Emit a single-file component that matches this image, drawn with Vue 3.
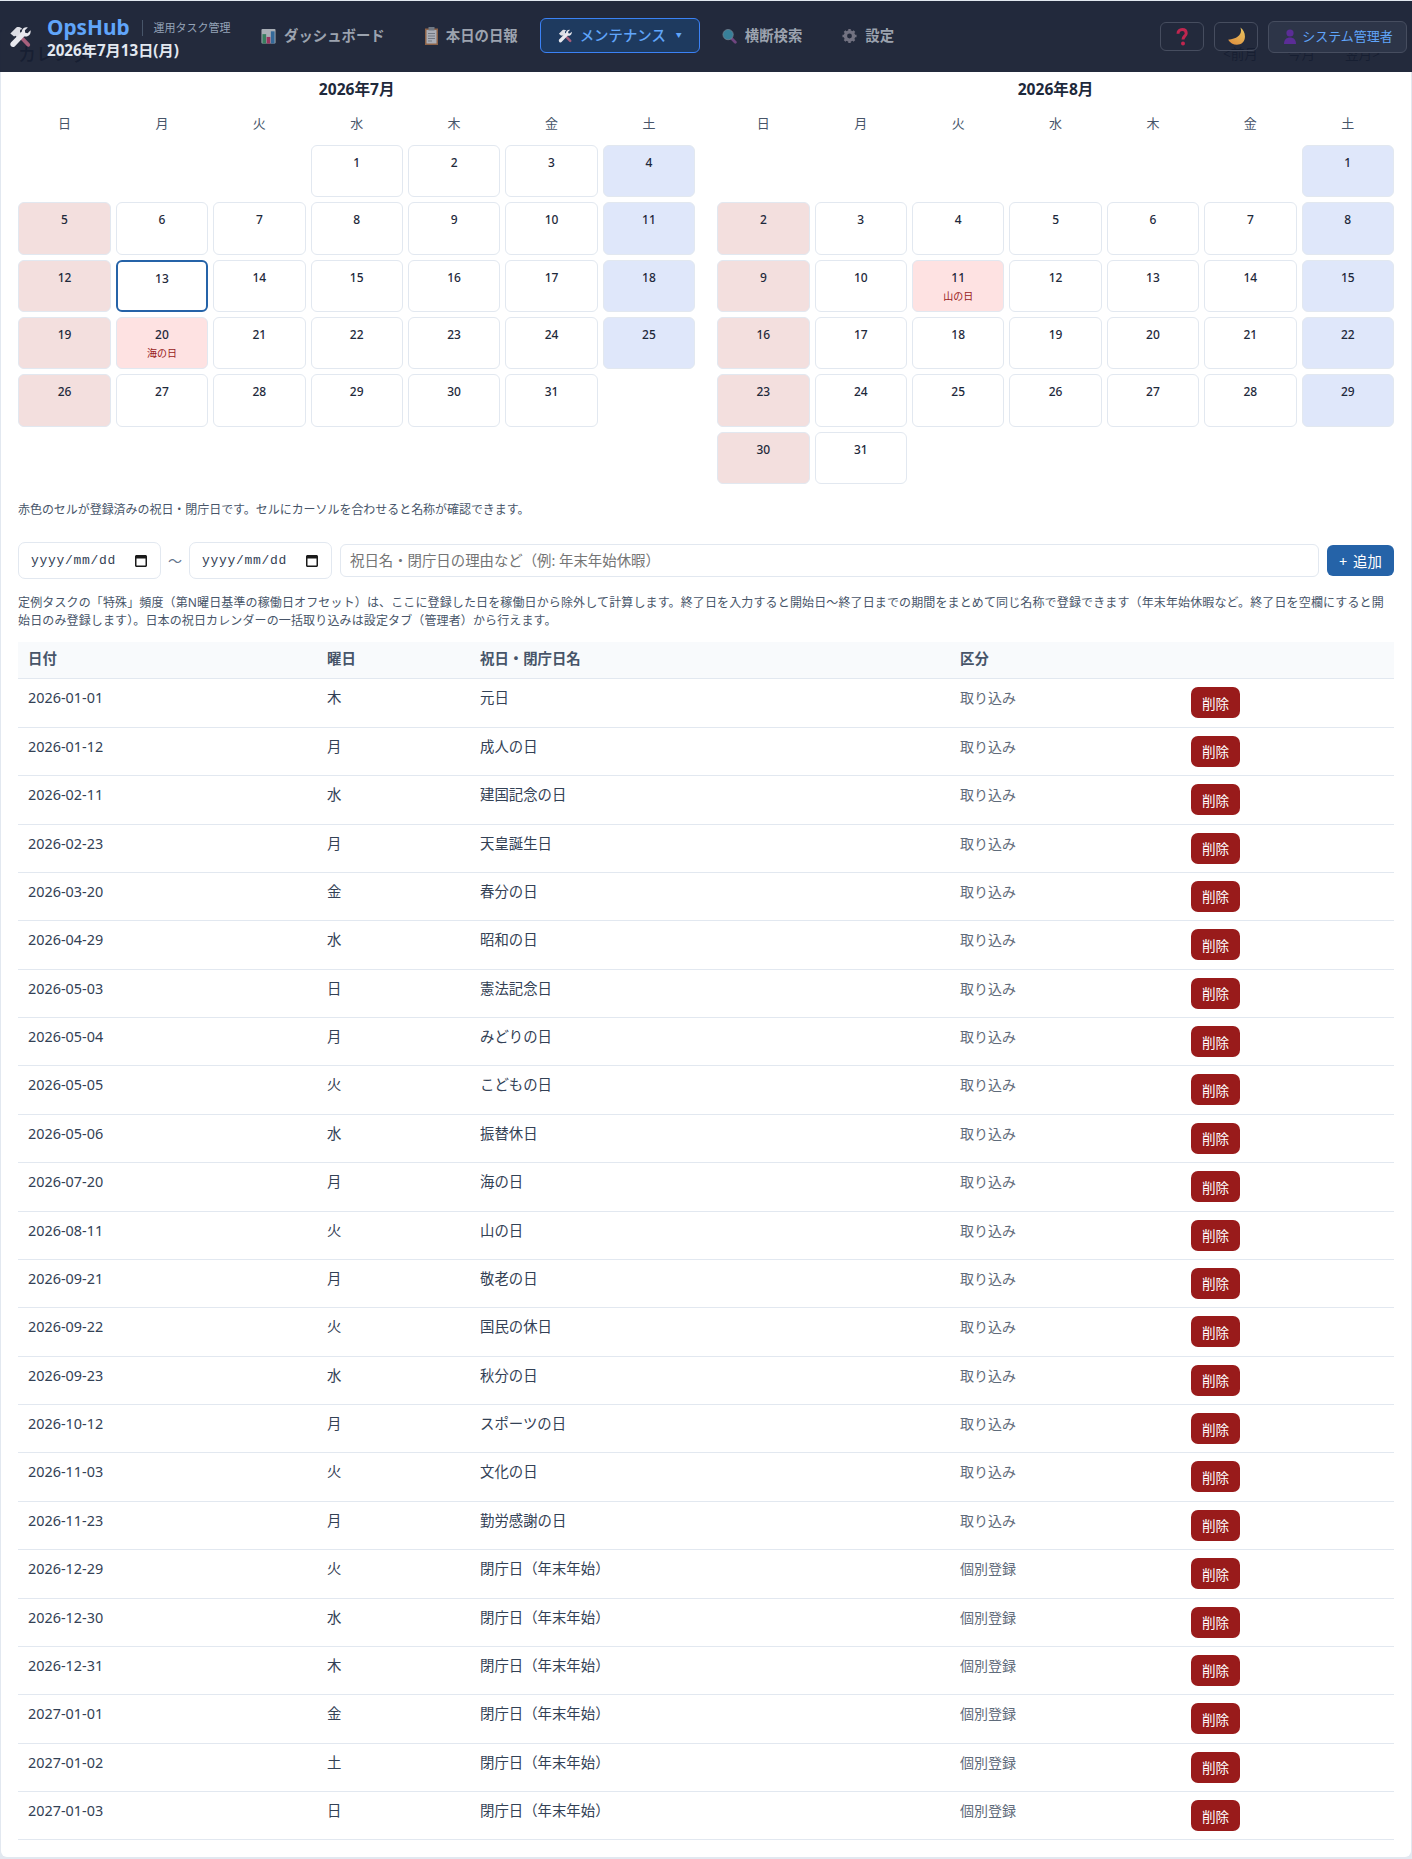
<script setup>
import { computed } from 'vue'

const weekdays = ['日', '月', '火', '水', '木', '金', '土']

// 登録済みの祝日・閉庁日
const holidays = [
  ['2026-01-01', '木', '元日', '取り込み'],
  ['2026-01-12', '月', '成人の日', '取り込み'],
  ['2026-02-11', '水', '建国記念の日', '取り込み'],
  ['2026-02-23', '月', '天皇誕生日', '取り込み'],
  ['2026-03-20', '金', '春分の日', '取り込み'],
  ['2026-04-29', '水', '昭和の日', '取り込み'],
  ['2026-05-03', '日', '憲法記念日', '取り込み'],
  ['2026-05-04', '月', 'みどりの日', '取り込み'],
  ['2026-05-05', '火', 'こどもの日', '取り込み'],
  ['2026-05-06', '水', '振替休日', '取り込み'],
  ['2026-07-20', '月', '海の日', '取り込み'],
  ['2026-08-11', '火', '山の日', '取り込み'],
  ['2026-09-21', '月', '敬老の日', '取り込み'],
  ['2026-09-22', '火', '国民の休日', '取り込み'],
  ['2026-09-23', '水', '秋分の日', '取り込み'],
  ['2026-10-12', '月', 'スポーツの日', '取り込み'],
  ['2026-11-03', '火', '文化の日', '取り込み'],
  ['2026-11-23', '月', '勤労感謝の日', '取り込み'],
  ['2026-12-29', '火', '閉庁日（年末年始）', '個別登録'],
  ['2026-12-30', '水', '閉庁日（年末年始）', '個別登録'],
  ['2026-12-31', '木', '閉庁日（年末年始）', '個別登録'],
  ['2027-01-01', '金', '閉庁日（年末年始）', '個別登録'],
  ['2027-01-02', '土', '閉庁日（年末年始）', '個別登録'],
  ['2027-01-03', '日', '閉庁日（年末年始）', '個別登録']
]

const buildMonth = (title, month, offset, days) => {
  const cells = []
  for (let i = 0; i < offset; i++) cells.push({ key: 'e' + i, empty: true })
  for (let d = 1; d <= days; d++) {
    const dow = (offset + d - 1) % 7
    const iso = `2026-${String(month).padStart(2, '0')}-${String(d).padStart(2, '0')}`
    const hit = holidays.find(h => h[0] === iso)
    cells.push({
      key: iso,
      day: d,
      sun: dow === 0,
      sat: dow === 6,
      holiday: hit ? hit[2] : '',
      today: iso === '2026-07-13'
    })
  }
  return { title, cells }
}

const months = computed(() => [
  buildMonth('2026年7月', 7, 3, 31),
  buildMonth('2026年8月', 8, 6, 31)
])
</script>

<template>
  <div class="page">
    <svg class="defs" width="0" height="0">
      <defs>
        <linearGradient id="moon" x1="0.8" y1="0" x2="0.2" y2="1">
          <stop offset="0" stop-color="#e8c25f" />
          <stop offset="1" stop-color="#e0913f" />
        </linearGradient>
      </defs>
      <symbol id="tools" viewBox="0 0 24 24">
        <path d="M10 9 21 20.500" stroke="#a8607c" stroke-width="4.200" stroke-linecap="round" />
        <path d="M1.500 8.200 8 1.500c2.200-.8 4.500-.3 6.500 1.700l-2.300.8-.2 2.500 1 1-4.500 4.500-1.500-1.500-1.500 1Z" fill="#dcdde4" />
        <path d="M14 5.500C14.500 2.500 17.500.8 20.500 1.500L17.300 4.700l.4 2.600 2.600.5 3.200-3.200c.7 3-1 6-4 6.800-1 .3-2 .2-3 0L6.500 22c-1.300 1.300-3 1.300-4.200.1S1 19 2.300 17.700L14 6Z" fill="#e8e8ee" />
      </symbol>
    </svg>

    <header class="topbar">
      <div class="brand">
        <svg class="logo"><use href="#tools" /></svg>
        <div>
          <div class="brand-line">
            <span class="brand-name">OpsHub</span>
            <span class="brand-sub">運用タスク管理</span>
          </div>
          <div class="brand-date">2026年7月13日(月)</div>
        </div>
      </div>

      <nav class="nav">
        <a class="nav-item">
          <svg class="nav-icon" viewBox="0 0 16 16">
            <rect x="0.500" y="0.500" width="15" height="15.500" rx="1" fill="#d5dade" />
            <rect x="1.500" y="6" width="4" height="10" fill="#3f9b6d" />
            <rect x="6" y="9" width="4" height="7" fill="#c2386b" />
            <rect x="10.500" y="3" width="4" height="13" fill="#3a7fb8" />
          </svg>
          ダッシュボード
        </a>
        <a class="nav-item">
          <svg class="nav-icon clip" viewBox="0 0 13 18">
            <rect x="0" y="1.500" width="13" height="16.500" fill="#b2774c" />
            <rect x="1.500" y="3" width="10" height="13.500" fill="#d8dbe0" />
            <rect x="3.500" y="0" width="6" height="3.500" fill="#8a939c" />
            <path d="M3 6.500h7M3 9h7M3 11.500h7M3 14h4" stroke="#8b939b" stroke-width="1" />
          </svg>
          本日の日報
        </a>
        <a class="nav-item active">
          <svg class="nav-icon tools"><use href="#tools" /></svg>
          メンテナンス
          <span class="caret">▼</span>
        </a>
        <a class="nav-item">
          <svg class="nav-icon" viewBox="0 0 16 16">
            <path d="M10 10.500 14.200 14.700" stroke="#8a4f96" stroke-width="3" stroke-linecap="round" />
            <circle cx="6.500" cy="6.500" r="5.500" fill="#3f9db8" stroke="#8fa3b0" stroke-width="0.800" />
          </svg>
          横断検索
        </a>
        <a class="nav-item">
          <svg class="nav-icon" viewBox="0 0 16 16">
            <circle cx="8" cy="8" r="4.400" fill="none" stroke="#8d8a98" stroke-width="3.600" />
            <path d="M8 .5v3M8 12.500v3M.5 8h3M12.500 8h3M2.700 2.700l2 2M11.300 11.300l2 2M13.300 2.700l-2 2M4.700 11.300l-2 2" stroke="#8d8a98" stroke-width="2.600" />
          </svg>
          設定
        </a>
      </nav>

      <div class="top-actions">
        <button class="icon-btn">
          <svg class="help-icon" viewBox="0 0 16 18">
            <path d="M4 5.800C4 3 5.800 1.500 8.200 1.500s4 1.500 4 3.700c0 3-3.200 3-3.200 6.300" fill="none" stroke="#c0264f" stroke-width="3" />
            <circle cx="9" cy="15.600" r="2" fill="#c0264f" />
          </svg>
        </button>
        <button class="icon-btn">
          <svg class="moon-icon" viewBox="0 0 17 17">
            <path d="M12 .5C14 5.500 10.500 10.500 1 11.500 3.500 16 10 17.500 13.800 14.200 17.500 10.500 16.500 3.500 12 .5Z" fill="url(#moon)" />
          </svg>
        </button>
        <button class="user-btn">
          <svg class="btn-icon" viewBox="0 0 16 16">
            <circle cx="8" cy="5" r="3.600" fill="#5b2d96" />
            <path d="M2 16c0-4.500 2.600-6.500 6-6.500s6 2 6 6.500Z" fill="#5b2d96" />
          </svg>
          システム管理者
        </button>
      </div>
    </header>

    <main class="card">
      <div class="card-head">
        <h2>カレンダー</h2>
        <div class="month-nav">
          <span>&lt;前月</span>
          <span>今月</span>
          <span>翌月&gt;</span>
        </div>
      </div>

      <div class="months">
        <section v-for="m in months" :key="m.title" class="month">
          <div class="month-title">{{ m.title }}</div>
          <div class="grid">
            <div v-for="w in weekdays" :key="w" class="weekday">{{ w }}</div>
            <template v-for="c in m.cells" :key="c.key">
              <div v-if="c.empty"></div>
              <div
                v-else
                class="cell"
                :class="{ sun: c.sun, sat: c.sat, holiday: c.holiday, today: c.today }"
              >
                <div class="num">{{ c.day }}</div>
                <div v-if="c.holiday" class="hname">{{ c.holiday }}</div>
              </div>
            </template>
          </div>
        </section>
      </div>

      <p class="note legend">赤色のセルが登録済みの祝日・閉庁日です。セルにカーソルを合わせると名称が確認できます。</p>

      <form class="add-form" @submit.prevent>
        <label class="date">
          <span>yyyy/mm/dd</span>
          <svg class="cal" viewBox="0 0 12 13">
            <path d="M0 2.500C0 1.700.7 1 1.500 1h9c.8 0 1.500.7 1.500 1.500v9c0 .8-.7 1.500-1.500 1.500h-9C.7 13 0 12.300 0 11.500ZM1.500 4.500v7h9v-7Z" fill="#1a1a1a" fill-rule="evenodd" />
          </svg>
        </label>
        <span class="tilde">～</span>
        <label class="date">
          <span>yyyy/mm/dd</span>
          <svg class="cal" viewBox="0 0 12 13">
            <path d="M0 2.500C0 1.700.7 1 1.500 1h9c.8 0 1.500.7 1.500 1.500v9c0 .8-.7 1.500-1.500 1.500h-9C.7 13 0 12.300 0 11.500ZM1.500 4.500v7h9v-7Z" fill="#1a1a1a" fill-rule="evenodd" />
          </svg>
        </label>
        <input type="text" class="reason" placeholder="祝日名・閉庁日の理由など（例: 年末年始休暇）" />
        <button class="add">+ 追加</button>
      </form>

      <p class="note help">定例タスクの「特殊」頻度（第N曜日基準の稼働日オフセット）は、ここに登録した日を稼働日から除外して計算します。終了日を入力すると開始日～終了日までの期間をまとめて同じ名称で登録できます（年末年始休暇など。終了日を空欄にすると開始日のみ登録します）。日本の祝日カレンダーの一括取り込みは設定タブ（管理者）から行えます。</p>

      <table class="list">
        <colgroup>
          <col class="c-date" />
          <col class="c-dow" />
          <col class="c-name" />
          <col class="c-kind" />
          <col class="c-act" />
        </colgroup>
        <thead>
          <tr>
            <th>日付</th>
            <th>曜日</th>
            <th>祝日・閉庁日名</th>
            <th>区分</th>
            <th></th>
          </tr>
        </thead>
        <tbody>
          <tr v-for="h in holidays" :key="h[0]">
            <td>{{ h[0] }}</td>
            <td>{{ h[1] }}</td>
            <td>{{ h[2] }}</td>
            <td class="kind">{{ h[3] }}</td>
            <td class="act"><button class="del">削除</button></td>
          </tr>
        </tbody>
      </table>
    </main>
  </div>
</template>

<style>
html,
body {
  margin: 0;
  background: #e2e8f0;
}
</style>

<style scoped>
.page {
  position: relative;
  width: 1412px;
  height: 1859px;
  overflow: hidden;
  background: #e2e8f0;
  font-family: "Noto Sans", "Noto Sans CJK JP", sans-serif;
  color: #1e293b;
}

.defs {
  position: absolute;
}

.topbar {
  position: absolute;
  top: 1px;
  left: 0;
  right: 0;
  height: 71px;
  z-index: 10;
  display: flex;
  align-items: center;
  padding: 0 5px 0 9px;
  box-sizing: border-box;
  background: rgba(23, 31, 50, 0.95);
}

.brand {
  display: flex;
  align-items: center;
  gap: 16px;
  width: 234px;
  flex-shrink: 0;
}

.logo {
  width: 22px;
  height: 22px;
  margin-top: 1px;
}

.brand-line {
  display: flex;
  align-items: center;
  white-space: nowrap;
}

.brand-name {
  font-size: 20.8px;
  line-height: 26px;
  font-weight: 700;
  color: #60a5fa;
}

.brand-sub {
  margin-top: 3px;
  margin-left: 12px;
  padding-left: 11px;
  border-left: 1px solid #475569;
  font-size: 11px;
  line-height: 16px;
  color: #94a3b8;
}

.brand-date {
  font-size: 15.2px;
  line-height: 20px;
  font-weight: 700;
  color: #e2e8f0;
  white-space: nowrap;
}

.nav {
  display: flex;
  align-items: center;
  gap: 4px;
  margin-top: -2px;
}

.nav-item {
  display: flex;
  align-items: center;
  gap: 8px;
  height: 35px;
  padding: 0 17px 2px;
  box-sizing: border-box;
  border: 1px solid transparent;
  border-radius: 6px;
  font-size: 14.4px;
  font-weight: 700;
  color: #9ca3af;
  white-space: nowrap;
}

.nav-item.active {
  background: #1e3a5f;
  border-color: #3b82f6;
  color: #60a5fa;
  font-weight: 500;
}

.nav-icon {
  width: 15px;
  height: 16px;
  margin-top: 3px;
  opacity: 0.75;
}

.nav-icon.clip {
  width: 13px;
  height: 18px;
}

.nav-icon.tools {
  width: 14px;
  height: 14px;
  opacity: 1;
}

.caret {
  width: 6px;
  margin-left: 2px;
  font-size: 6px;
}

.top-actions {
  display: flex;
  align-items: center;
  gap: 10px;
  margin-left: auto;
}

.icon-btn {
  width: 44px;
  height: 29px;
  display: flex;
  align-items: center;
  justify-content: center;
  padding: 0;
  background: transparent;
  border: 1px solid #464d5f;
  border-radius: 6px;
}

.btn-icon {
  width: 16px;
  height: 16px;
}

.help-icon {
  width: 16px;
  height: 18px;
}

.moon-icon {
  width: 19px;
  height: 19px;
}

.user-btn {
  width: 139px;
  height: 32px;
  display: flex;
  align-items: center;
  justify-content: center;
  gap: 4px;
  padding: 0 0 2px;
  background: #2d3548;
  border: 1px solid #464d5f;
  border-radius: 6px;
  font-family: inherit;
  font-size: 13px;
  color: #60a5fa;
  white-space: nowrap;
}

.card {
  position: absolute;
  top: 30px;
  left: 1px;
  width: 1410px;
  height: 1827px;
  padding: 0 17px;
  box-sizing: border-box;
  background: #fff;
  border-radius: 6px;
}

.card-head {
  height: 45px;
  display: flex;
  align-items: center;
  justify-content: space-between;
}

.card-head h2 {
  margin: 0;
  font-size: 18px;
  font-weight: 500;
}

.month-nav {
  display: flex;
  gap: 30px;
  padding-right: 14px;
  font-size: 13.6px;
}

.months {
  display: grid;
  grid-template-columns: 1fr 1fr;
  gap: 22px;
  margin-left: 0.3px;
}

.month-title {
  height: 29px;
  line-height: 28px;
  text-align: center;
  font-size: 15.6px;
  font-weight: 700;
}

.grid {
  display: grid;
  grid-template-columns: repeat(7, 1fr);
  gap: 5px;
}

.weekday {
  height: 36px;
  line-height: 39px;
  text-align: center;
  font-size: 13px;
  color: #475569;
}

.cell {
  height: 52.330px;
  padding-top: 8px;
  box-sizing: border-box;
  text-align: center;
  background: #fff;
  border: 1px solid #e2e8f0;
  border-radius: 6px;
  font-size: 12px;
  line-height: 18px;
  font-weight: 500;
}

.cell.sun {
  background: #f3dfde;
}

.cell.sat {
  background: #dfe7fa;
}

.cell.holiday {
  background: #fee2e2;
}

.cell.today {
  border: 2px solid #2563a8;
}

.hname {
  margin-top: 1px;
  font-size: 10px;
  line-height: 16px;
  font-weight: 400;
  color: #991b1b;
}

.note {
  margin: 0;
  font-size: 12px;
  line-height: 16px;
  color: #475569;
}

.legend {
  margin-top: 18px;
  letter-spacing: -0.05px;
}

.add-form {
  display: flex;
  align-items: center;
  margin-top: 24px;
  height: 37px;
}

.date {
  width: 143px;
  height: 37px;
  display: flex;
  align-items: center;
  justify-content: space-between;
  padding: 0 13px 0 12px;
  box-sizing: border-box;
  background: #fff;
  border: 1px solid #e2e8f0;
  border-radius: 7px;
  font-family: "Liberation Mono", monospace;
  font-size: 13px;
  letter-spacing: 0.7px;
  color: #334155;
}

.cal {
  width: 12px;
  height: 13px;
}

.tilde {
  width: 28px;
  text-align: center;
  font-size: 14px;
  color: #64748b;
}

.reason {
  flex: 1;
  min-width: 0;
  height: 33px;
  margin-left: 8px;
  padding: 0 9px;
  box-sizing: border-box;
  border: 1px solid #e2e8f0;
  border-radius: 6px;
  font-family: inherit;
  font-size: 14.4px;
}

.reason::placeholder {
  color: #757575;
}

.add {
  width: 67px;
  height: 31px;
  margin-left: 8px;
  padding: 0;
  background: #2563a8;
  border: none;
  border-radius: 6px;
  color: #fff;
  font-family: inherit;
  font-size: 14.4px;
  word-spacing: 2px;
}

.help {
  margin-top: 15px;
  padding-right: 10px;
  line-height: 18px;
  letter-spacing: 0.13px;
}

.list {
  width: 1376px;
  margin-top: 12px;
  table-layout: fixed;
  border-collapse: collapse;
  font-size: 14.4px;
}

.c-date {
  width: 299px;
}

.c-dow {
  width: 153px;
}

.c-name {
  width: 480px;
}

.c-kind {
  width: 231px;
}

.c-act {
  width: 213px;
}

.list th {
  height: 37px;
  padding: 0 10px 2px;
  box-sizing: border-box;
  text-align: left;
  font-size: 14.4px;
  line-height: 20px;
  background: #f8fafc;
  border-bottom: 1px solid #e2e8f0;
  color: #475569;
}

.list td {
  height: 48.375px;
  padding: 9px 10px 0;
  box-sizing: border-box;
  vertical-align: top;
  border-bottom: 1px solid #e2e8f0;
  line-height: 20px;
  color: #334155;
}

.list .kind {
  font-size: 14px;
  color: #5f6b7a;
}

.list .act {
  padding-top: 8px;
}

.del {
  display: block;
  width: 49px;
  height: 31px;
  padding: 0;
  background: #991b1b;
  border: none;
  border-radius: 7px;
  color: #fff;
  font-family: inherit;
  font-size: 13.6px;
}
</style>
